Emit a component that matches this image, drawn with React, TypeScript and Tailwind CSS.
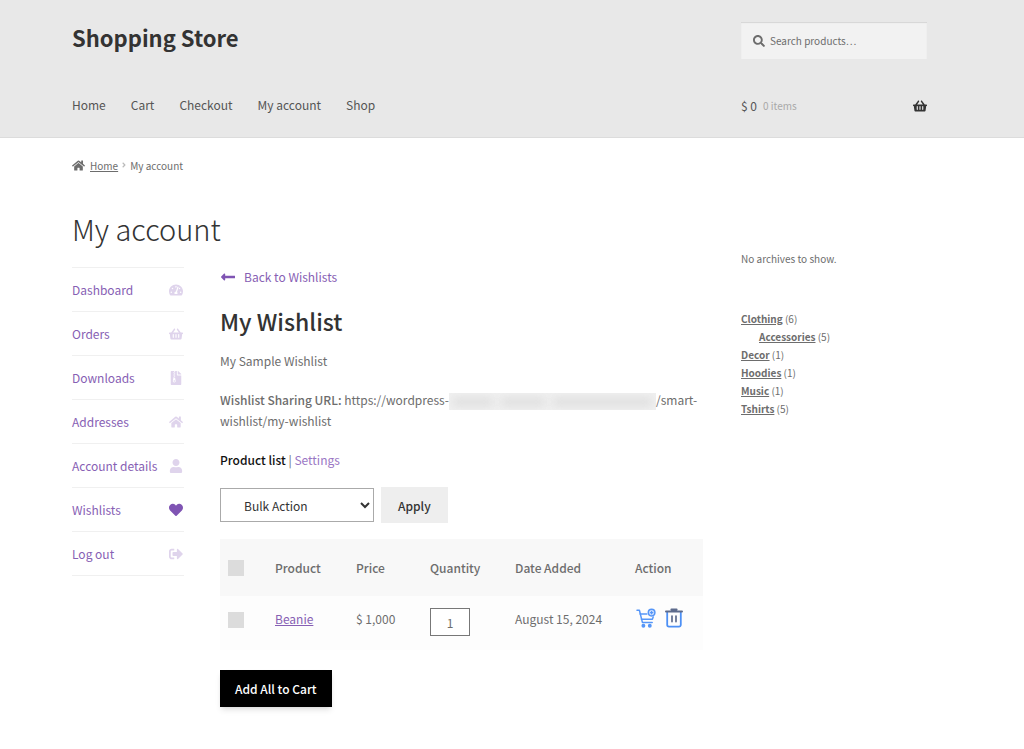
import React, { useState } from 'react';
import {
  FaAngleRight,
  FaFileArchive,
  FaHeart,
  FaHome,
  FaLongArrowAltLeft,
  FaSearch,
  FaShoppingBasket,
  FaSignOutAlt,
  FaTachometerAlt,
  FaUser,
} from 'react-icons/fa';

const menuLinks = ['Home', 'Cart', 'Checkout', 'My account', 'Shop'];

const accountLinks = [
  { label: 'Dashboard', icon: FaTachometerAlt },
  { label: 'Orders', icon: FaShoppingBasket },
  { label: 'Downloads', icon: FaFileArchive },
  { label: 'Addresses', icon: FaHome },
  { label: 'Account details', icon: FaUser },
  { label: 'Wishlists', icon: FaHeart },
  { label: 'Log out', icon: FaSignOutAlt },
];

const categories = [
  { name: 'Clothing', count: 6, child: false },
  { name: 'Accessories', count: 5, child: true },
  { name: 'Decor', count: 1, child: false },
  { name: 'Hoodies', count: 1, child: false },
  { name: 'Music', count: 1, child: false },
  { name: 'Tshirts', count: 5, child: false },
];

function CartAddIcon() {
  return (
    <svg viewBox="0 0 20 20" className="h-5 w-5" fill="none" stroke="#5596f8" strokeWidth="1.5" strokeLinecap="round" strokeLinejoin="round">
      <path d="M1 2.2h2.4l3 12.2h9.8" />
      <path d="M4.2 6h6.6" />
      <path d="M5.4 11.2h11l.8-2.2" />
      <circle cx="15.6" cy="4.6" r="3.3" fill="#cfe0fd" />
      <path d="M15.6 3.4v2.4M14.4 4.6h2.4" strokeWidth="1.2" />
      <circle cx="7.4" cy="17.8" r="1.2" fill="#5596f8" />
      <circle cx="13.8" cy="17.8" r="1.2" fill="#5596f8" />
    </svg>
  );
}

function TrashIcon() {
  return (
    <svg viewBox="0 0 20 20" className="h-5 w-5" fill="none" strokeLinecap="round" strokeLinejoin="round">
      <path d="M3.2 4.6v12.2a1.8 1.8 0 0 0 1.8 1.8h10a1.8 1.8 0 0 0 1.8-1.8V4.6" stroke="#4d90f5" strokeWidth="1.8" />
      <path d="M2 3.6h16M7.4 1.4h5.2" stroke="#5d6b8c" strokeWidth="2" />
      <path d="M8 8v5.6M12 8v5.6" stroke="#5d6b8c" strokeWidth="1.7" />
    </svg>
  );
}

function Header() {
  return (
    <header className="border-b border-[#dcdcdc] bg-[#e8e8e8]">
      <div className="flex justify-between pt-[22px] pr-[97px] pl-[72px]">
        <div>
          <a href="#" className="block text-[22px] leading-[30px] font-bold text-[#333]">Shopping Store</a>
          <nav className="mt-[42px] flex h-[43px] gap-[25px] text-[#555]">
            {menuLinks.map((link) => (
              <a key={link} href="#">{link}</a>
            ))}
          </nav>
        </div>
        <div className="w-[186px]">
          <div className="flex h-[37px] items-center gap-[5px] bg-[#f2f2f2] px-3 text-[#6d6d6d] shadow-[inset_0_1px_1px_rgba(0,0,0,0.12)]">
            <FaSearch className="size-3" />
            <input type="search" aria-label="Search products" placeholder="Search products…" className="min-w-0 flex-1 bg-transparent text-[10px] outline-none placeholder:text-[#6d6d6d]" />
          </div>
          <a href="#" className="mt-9 flex items-center text-[#555]">
            <span>$ 0</span>
            <span className="ml-[6px] text-[10px] text-[#a9a9a9]">0 items</span>
            <FaShoppingBasket className="ml-auto size-[14px] text-[#333]" />
          </a>
        </div>
      </div>
    </header>
  );
}

function AccountNav() {
  return (
    <nav className="w-28 shrink-0 pt-px">
      <ul className="border-t border-[#f0f0f0]">
        {accountLinks.map(({ label, icon: Icon }) => (
          <li key={label} className="border-b border-[#f0f0f0]">
            <a href="#" className="flex h-[43px] items-center justify-between pr-px text-[#8760b4]">
              {label}
              <Icon className={label === 'Wishlists' ? 'size-[14px] text-[#7f54b3]' : 'size-[14px] text-[#dfd4ec]'} />
            </a>
          </li>
        ))}
      </ul>
    </nav>
  );
}

function ProductTable() {
  const [quantity, setQuantity] = useState('1');
  const checkbox = 'block size-4 appearance-none bg-[#dcdcdc] checked:bg-[#7f54b3]';

  return (
    <table className="mt-4 w-full table-fixed text-left">
      <thead className="bg-[#f8f8f8]">
        <tr className="h-[57px]">
          <th className="w-[47px] px-2"><input type="checkbox" aria-label="Select all" className={checkbox} /></th>
          <th className="w-[81px] px-2 font-medium">Product</th>
          <th className="w-[74px] px-2 font-medium">Price</th>
          <th className="w-[85px] px-2 font-medium">Quantity</th>
          <th className="w-[120px] px-2 font-medium">Date Added</th>
          <th className="px-2 font-medium">Action</th>
        </tr>
      </thead>
      <tbody className="bg-[#fdfdfd]">
        <tr className="h-[54px] align-top">
          <td className="px-2 pt-4"><input type="checkbox" aria-label="Select Beanie" className={checkbox} /></td>
          <td className="px-2 pt-3"><a href="#" className="text-[#8760b4] underline">Beanie</a></td>
          <td className="px-2 pt-3">$ 1,000</td>
          <td className="px-2 pt-3">
            <input
              type="text"
              aria-label="Quantity"
              value={quantity}
              onChange={(e) => setQuantity(e.target.value)}
              className="block h-7 w-10 border border-[#777] bg-white text-center"
            />
          </td>
          <td className="px-2 pt-3">August 15, 2024</td>
          <td className="px-2 pt-3">
            <div className="flex gap-2 pl-px">
              <button type="button" aria-label="Add to cart"><CartAddIcon /></button>
              <button type="button" aria-label="Remove"><TrashIcon /></button>
            </div>
          </td>
        </tr>
      </tbody>
    </table>
  );
}

function Wishlist() {
  return (
    <section className="min-w-0 flex-1">
      <a href="#" className="flex items-center gap-2 text-[#8760b4]">
        <FaLongArrowAltLeft className="size-4 text-[#7f54b3]" />
        Back to Wishlists
      </a>
      <h2 className="mt-[18px] text-[23px] leading-8 font-medium text-[#333]">My Wishlist</h2>
      <p className="mt-[13px]">My Sample Wishlist</p>
      <p className="mt-[18px]">
        <strong className="font-medium">Wishlist Sharing URL:</strong> https://wordpress-
        <span className="inline-flex h-[17px] w-[207px] items-center gap-2 overflow-hidden bg-[#f0f0f0] px-1 align-middle">
          <span className="h-2 w-10 bg-[#dedede] blur-xs" />
          <span className="h-2 w-11 bg-[#dedede] blur-xs" />
          <span className="h-2 flex-1 bg-[#dedede] blur-xs" />
        </span>
        <span>/smart-</span>
        <wbr />
        <span>wishlist/my-wishlist</span>
      </p>
      <p className="mt-[18px]">
        <strong className="font-medium text-[#111]">Product list</strong> | <a href="#" className="text-[#9a76c4]">Settings</a>
      </p>
      <div className="mt-[17px] flex items-center gap-[7px]">
        <select aria-label="Bulk Action" className="h-[34px] w-[154px] border border-[#aaa] bg-white pl-[19px] text-[#333]">
          <option>Bulk Action</option>
          <option>Add to cart</option>
          <option>Remove</option>
        </select>
        <button type="button" className="h-9 bg-[#eee] px-[17px] font-medium text-[#333]">Apply</button>
      </div>
      <ProductTable />
      <button type="button" className="mt-5 h-[37px] bg-black px-[15px] font-medium text-white shadow-md">Add All to Cart</button>
    </section>
  );
}

function Sidebar() {
  return (
    <aside className="w-[186px] shrink-0 pt-10 text-[10px] leading-[18px]">
      <p>No archives to show.</p>
      <ul className="mt-[42px]">
        {categories.map((cat) => (
          <li key={cat.name} className={cat.child ? 'pl-[18px]' : ''}>
            <a href="#" className="font-bold underline">{cat.name}</a> ({cat.count})
          </li>
        ))}
      </ul>
    </aside>
  );
}

export default function App() {
  return (
    <div className="min-h-screen bg-white font-['Noto_Sans_CJK_SC',sans-serif] text-[12px] leading-[21px] text-[#6d6d6d]">
      <Header />
      <div className="pr-[97px] pl-[72px]">
        <nav className="flex h-[54px] items-center text-[10px]">
          <FaHome className="mr-[5px] size-[13px]" />
          <a href="#" className="underline">Home</a>
          <FaAngleRight className="mx-[2px] size-2 text-[#bbb]" />
          <span>My account</span>
        </nav>
        <div className="flex gap-[38px] pt-[18px]">
          <main className="min-w-0 flex-1">
            <h1 className="text-[29px] leading-9 font-light text-[#333]">My account</h1>
            <div className="mt-5 flex gap-9">
              <AccountNav />
              <Wishlist />
            </div>
          </main>
          <Sidebar />
        </div>
      </div>
    </div>
  );
}
